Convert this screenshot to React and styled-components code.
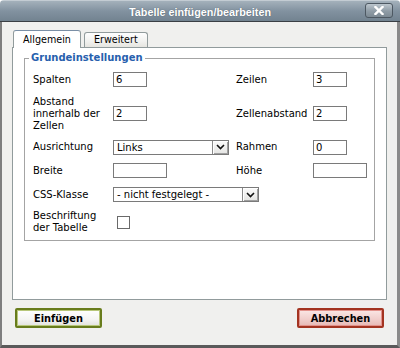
import React from "react";
import styled, { createGlobalStyle } from "styled-components";

const Global = createGlobalStyle`
  html, body { margin: 0; padding: 0; background: #ffffff; }
  * { box-sizing: border-box; }
`;

const Dialog = styled.div`
  width: 400px;
  height: 348px;
  display: flex;
  flex-direction: column;
  font-family: "DejaVu Sans", Verdana, sans-serif;
  font-size: 10px;
  color: #000;
  border-radius: 4px 4px 0 0;
  overflow: hidden;
`;

const TitleBar = styled.div`
  height: 22px;
  flex: 0 0 22px;
  display: grid;
  grid-template-columns: 1fr auto 1fr;
  align-items: center;
  padding: 0 7px 0 7px;
  background: linear-gradient(#a4b1bb, #8292a0 50%, #728390);
  border-bottom: 1px solid #3a3f44;
  border-top: 1px solid #c3ccd3;
`;

const Title = styled.div`
  grid-column: 2;
  font-family: "Liberation Sans", Arial, sans-serif;
  font-weight: bold;
  font-size: 10.8px;
  color: #fff;
  text-shadow: 0 0 1px rgba(40, 50, 60, 0.6);
  white-space: nowrap;
  padding-top: 1px;
`;

const CloseButton = styled.button`
  grid-column: 3;
  justify-self: end;
  width: 28px;
  height: 15px;
  padding: 0;
  border: 1px solid #4d5862;
  border-radius: 3px;
  background: linear-gradient(#bcc6cd, #8f9ca6 55%, #7d8a94);
  display: flex;
  align-items: center;
  justify-content: center;
  margin-top: -1px;
`;

const Body = styled.div`
  flex: 1;
  display: flex;
  flex-direction: column;
  background: #f0f0ee;
  border-left: 2px solid #7e7e7e;
  border-right: 3px solid #8a8a8a;
  border-bottom: 3px solid #5a5a5a;
  padding: 8px 10px 0 10px;
`;

const TabRow = styled.div`
  display: flex;
  align-items: flex-end;
  gap: 3px;
  padding-left: 1px;
  height: 17px;
`;

const Tab = styled.div`
  position: relative;
  z-index: ${(p) => (p.$active ? 2 : 1)};
  height: ${(p) => (p.$active ? "18px" : "15px")};
  margin-bottom: ${(p) => (p.$active ? "-1px" : "0")};
  padding: ${(p) => (p.$active ? "3px 9px 0 9px" : "1px 9px 0 9px")};
  border: 1px solid #919b9c;
  border-bottom: ${(p) => (p.$active ? "none" : "0")};
  border-top-color: ${(p) => (p.$active ? "#7a8fa6" : "#919b9c")};
  border-radius: 3px 3px 0 0;
  background: ${(p) =>
    p.$active ? "#ffffff" : "linear-gradient(#fefefe, #f1f1ef 60%, #e6e5e0)"};
  font-size: 9.6px;
  line-height: 12px;
  white-space: nowrap;
`;

const Panel = styled.div`
  height: 253px;
  background: #ffffff;
  border: 1px solid #919b9c;
  padding: 4px 11px 0 11px;
`;

const Group = styled.fieldset`
  margin: 0;
  padding: 6px 8px 0 8px;
  border: 1px solid #a4a4a4;
  min-width: 0;
`;

const Legend = styled.legend`
  margin-left: -4px;
  padding: 0 2px;
  font-weight: bold;
  font-size: 10px;
  line-height: 12px;
  color: #2760ad;
`;

const FormGrid = styled.div`
  display: grid;
  grid-template-columns: 80px 123px 77px 1fr;
  grid-template-rows: 19px 49px 18px 29px 19px 36px;
  align-items: center;
`;

const Label = styled.div`
  grid-column: ${(p) => p.$col || 1};
  line-height: 12px;
  font-size: 10px;
  color: #000;
`;

const Field = styled.div`
  grid-column: ${(p) => p.$col || 2} / span ${(p) => p.$span || 1};
  display: flex;
  align-items: center;
`;

const TextInput = styled.div`
  width: ${(p) => p.$w}px;
  height: 15px;
  border: 1px solid #7a7a7a;
  background: #fff;
  padding: 0 0 0 2px;
  font-size: 10px;
  line-height: 13px;
`;

const SelectBox = styled.div`
  width: ${(p) => p.$w}px;
  height: 15px;
  display: flex;
  align-items: stretch;
  border: 1px solid #7a7a7a;
  background: #fff;
`;

const SelectValue = styled.div`
  flex: 1;
  padding-left: 3px;
  font-size: 10px;
  line-height: 13px;
  white-space: nowrap;
  overflow: hidden;
`;

const ArrowButton = styled.div`
  width: 16px;
  display: flex;
  align-items: center;
  justify-content: center;
  background: linear-gradient(#fbfbfb, #e4e4e2);
  border-left: 1px solid #8a8a8a;
  box-shadow: inset 1px 1px 0 #fff, inset -1px -1px 0 #a0a0a0;
`;

const CheckBox = styled.div`
  width: 13px;
  height: 13px;
  margin-left: 4px;
  border: 1px solid #6a6a6a;
  background: #fff;
`;

const ButtonRow = styled.div`
  display: flex;
  justify-content: space-between;
  padding: 8px 3px 0 3px;
`;

const ActionButton = styled.button`
  width: 87px;
  height: 20px;
  padding: 0;
  font-family: "DejaVu Sans", Verdana, sans-serif;
  font-weight: bold;
  font-size: 9.8px;
  color: #000;
  border: 2px solid ${(p) => (p.$tone === "cancel" ? "#a33421" : "#687c1c")};
  border-radius: 2px;
  background: ${(p) =>
    p.$tone === "cancel"
      ? "linear-gradient(#fbe7e5, #f0cdca 60%, #e6b9b5)"
      : "linear-gradient(#ffffff, #f4f4f2 60%, #e2e2de)"};
  box-shadow: inset 0 0 0 1px
    ${(p) => (p.$tone === "cancel" ? "#e2918a" : "#b8c77a")};
`;

const Chevron = () => (
  <svg width="9" height="6" viewBox="0 0 9 6">
    <path d="M1 1 L4.5 4.5 L8 1" fill="none" stroke="#111" strokeWidth="1.6" />
  </svg>
);

const CloseX = () => (
  <svg width="10" height="9" viewBox="0 0 10 9">
    <path d="M1.5 1 L8.5 8 M8.5 1 L1.5 8" stroke="#fff" strokeWidth="2.4" strokeLinecap="square" />
  </svg>
);

export default function App() {
  return (
    <>
      <Global />
      <Dialog>
        <TitleBar>
          <Title>Tabelle einfügen/bearbeiten</Title>
          <CloseButton aria-label="Schließen">
            <CloseX />
          </CloseButton>
        </TitleBar>
        <Body>
          <TabRow>
            <Tab $active>Allgemein</Tab>
            <Tab>Erweitert</Tab>
          </TabRow>
          <Panel>
            <Group>
              <Legend>Grundeinstellungen</Legend>
              <FormGrid>
                <Label>Spalten</Label>
                <Field>
                  <TextInput $w={34}>6</TextInput>
                </Field>
                <Label $col={3}>Zeilen</Label>
                <Field $col={4}>
                  <TextInput $w={34}>3</TextInput>
                </Field>

                <Label>
                  Abstand
                  <br />
                  innerhalb der
                  <br />
                  Zellen
                </Label>
                <Field>
                  <TextInput $w={34}>2</TextInput>
                </Field>
                <Label $col={3}>Zellenabstand</Label>
                <Field $col={4}>
                  <TextInput $w={34}>2</TextInput>
                </Field>

                <Label>Ausrichtung</Label>
                <Field>
                  <SelectBox $w={116}>
                    <SelectValue>Links</SelectValue>
                    <ArrowButton>
                      <Chevron />
                    </ArrowButton>
                  </SelectBox>
                </Field>
                <Label $col={3}>Rahmen</Label>
                <Field $col={4}>
                  <TextInput $w={34}>0</TextInput>
                </Field>

                <Label>Breite</Label>
                <Field>
                  <TextInput $w={54} />
                </Field>
                <Label $col={3}>Höhe</Label>
                <Field $col={4}>
                  <TextInput $w={54} />
                </Field>

                <Label>CSS-Klasse</Label>
                <Field $span={2}>
                  <SelectBox $w={146}>
                    <SelectValue>- nicht festgelegt -</SelectValue>
                    <ArrowButton>
                      <Chevron />
                    </ArrowButton>
                  </SelectBox>
                </Field>

                <Label>
                  Beschriftung
                  <br />
                  der Tabelle
                </Label>
                <Field>
                  <CheckBox />
                </Field>
              </FormGrid>
            </Group>
          </Panel>
          <ButtonRow>
            <ActionButton>Einfügen</ActionButton>
            <ActionButton $tone="cancel">Abbrechen</ActionButton>
          </ButtonRow>
        </Body>
      </Dialog>
    </>
  );
}
